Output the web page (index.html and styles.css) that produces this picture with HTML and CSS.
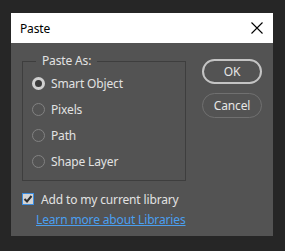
FILE: index.html
```html
<!DOCTYPE html>
<html>
<head>
<meta charset="utf-8">
<link rel="stylesheet" href="styles.css">
</head>
<body>
<div class="dialog">
  <div class="titlebar">
    <span class="title">Paste</span>
    <svg class="close" width="12" height="12" viewBox="0 0 12 12"><path d="M0.5 0.5 L11.5 11.5 M11.5 0.5 L0.5 11.5" stroke="#000" stroke-width="1.1" fill="none"/></svg>
  </div>
  <div class="body">
    <div class="top">
      <fieldset class="group">
        <legend>Paste As:</legend>
        <div class="opt"><span class="radio on"></span><span>Smart Object</span></div>
        <div class="opt"><span class="radio"></span><span>Pixels</span></div>
        <div class="opt"><span class="radio"></span><span>Path</span></div>
        <div class="opt"><span class="radio"></span><span>Shape Layer</span></div>
      </fieldset>
      <div class="buttons">
        <div class="btn default">OK</div>
        <div class="btn">Cancel</div>
      </div>
    </div>
    <div class="check">
      <span class="box"><svg width="10" height="10" viewBox="0 0 10 10"><path d="M1.5 5 L4 7.5 L8.5 2" stroke="#2e2e2e" stroke-width="2" fill="none"/></svg></span>
      <span>Add to my current library</span>
    </div>
    <a class="link">Learn more about Libraries</a>
  </div>
</div>
</body>
</html>
```

FILE: styles.css
```css
html, body {
  margin: 0;
  padding: 0;
  background: #262626;
  width: 285px;
  height: 251px;
  overflow: hidden;
}
body {
  font-family: "Noto Sans", "Open Sans", sans-serif;
  font-size: 12px;
  letter-spacing: -0.15px;
  color: #e2e2e2;
}
.dialog {
  margin: 13px 0 0 11px;
  width: 262px;
  height: 223px;
  display: flex;
  flex-direction: column;
}
.titlebar {
  height: 30px;
  background: #ffffff;
  display: flex;
  align-items: center;
  justify-content: space-between;
  padding: 0 10px 0 9px;
  flex-shrink: 0;
}
.title {
  color: #000;
}
.close {
  display: block;
}
.body {
  flex: 1;
  background: #535353;
  padding: 9px 0 0 11px;
  box-sizing: border-box;
}
.top {
  display: flex;
  align-items: flex-start;
  gap: 16px;
}
.group {
  margin: 0;
  padding: 0 0 6px 9px;
  width: 164px;
  box-sizing: border-box;
  border: 1px solid #3e3e3e;
  min-inline-size: 0;
}
.group legend {
  margin-left: 4px;
  padding: 0 6px;
  line-height: 18px;
}
.opt {
  height: 26px;
  display: flex;
  align-items: center;
  gap: 6px;
}
.radio {
  width: 13px;
  height: 13px;
  box-sizing: border-box;
  border-radius: 50%;
  border: 1px solid #828282;
  background: transparent;
}
.radio.on {
  border: 3px solid #d0d0d0;
  background: #3a3a3a;
}
.buttons {
  margin-top: 7px;
  display: flex;
  flex-direction: column;
  gap: 9px;
}
.btn {
  width: 60px;
  height: 25px;
  box-sizing: border-box;
  border-radius: 13px;
  border: 1px solid #707070;
  display: flex;
  align-items: center;
  justify-content: center;
  color: #e6e6e6;
}
.btn.default {
  border: 2px solid #c4c4c4;
}
.check {
  margin-top: 11px;
  display: flex;
  align-items: center;
  gap: 7px;
  height: 14px;
}
.box {
  width: 12px;
  height: 12px;
  box-sizing: border-box;
  border: 1px solid #3c8de0;
  background: #d4d4d4;
  display: flex;
  align-items: center;
  justify-content: center;
}
.box svg {
  display: block;
}
.link {
  display: inline-block;
  margin: 5px 0 0 14px;
  color: #4a9ff0;
  text-decoration: underline;
  line-height: 18px;
}
```
